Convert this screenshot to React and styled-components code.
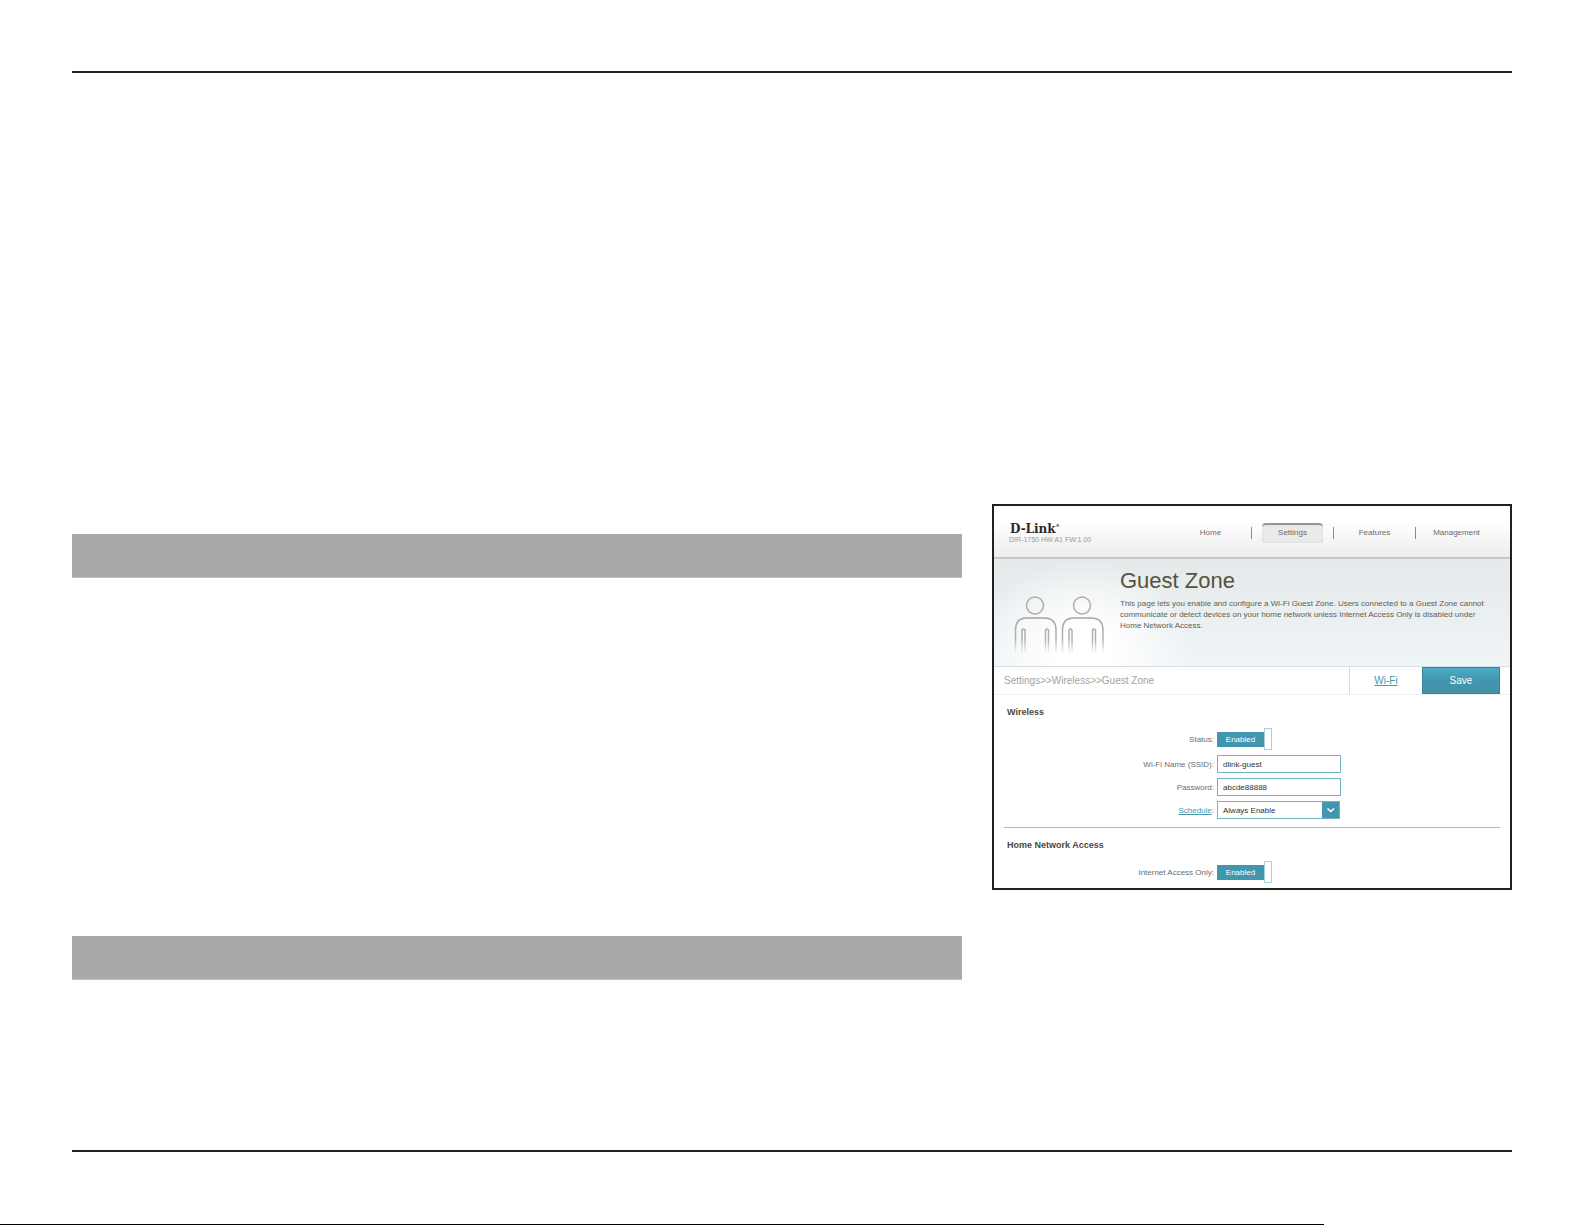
import React, { useState } from 'react';
import styled, { createGlobalStyle } from 'styled-components';

const App = () => {
  const [status, setStatus] = useState(true);
  const [internetOnly, setInternetOnly] = useState(true);
  const [ssid, setSsid] = useState('dlink-guest');
  const [password, setPassword] = useState('abcde88888');

  return (
    <Page>
      <GlobalStyle />
      <Sheet>
        <Columns>
          <TextColumn>
            <Band />
            <Band />
          </TextColumn>
          <Panel>
            <Header>
              <Brand>
                <Logo>
                  D-Link<sup>®</sup>
                </Logo>
                <Version>DIR-1750 HW:A1 FW:1.00</Version>
              </Brand>
              <Nav>
                <NavItem>
                  <NavLink href="#home">Home</NavLink>
                </NavItem>
                <NavItem>
                  <NavLink href="#settings" $active>
                    Settings
                  </NavLink>
                </NavItem>
                <NavItem>
                  <NavLink href="#features">Features</NavLink>
                </NavItem>
                <NavItem>
                  <NavLink href="#management">Management</NavLink>
                </NavItem>
              </Nav>
            </Header>
            <Hero>
              <Guests />
              <Intro>
                <h1>Guest Zone</h1>
                <p>
                  This page lets you enable and configure a Wi-Fi Guest Zone.
                  Users connected to a Guest Zone cannot communicate or detect
                  devices on your home network unless Internet Access Only is
                  disabled under Home Network Access.
                </p>
              </Intro>
            </Hero>
            <Toolbar>
              <Crumbs>Settings&gt;&gt;Wireless&gt;&gt;Guest Zone</Crumbs>
              <WifiTab>
                <a href="#wifi">Wi-Fi</a>
              </WifiTab>
              <SaveButton type="button">Save</SaveButton>
            </Toolbar>
            <Section>
              <SectionTitle>Wireless</SectionTitle>
              <Fields>
                <Label htmlFor="status">Status:</Label>
                <Toggle id="status" checked={status} onChange={setStatus} />
                <Label htmlFor="ssid">Wi-Fi Name (SSID):</Label>
                <TextInput
                  id="ssid"
                  value={ssid}
                  onChange={(e) => setSsid(e.target.value)}
                />
                <Label htmlFor="password">Password:</Label>
                <TextInput
                  id="password"
                  value={password}
                  onChange={(e) => setPassword(e.target.value)}
                />
                <Label htmlFor="schedule">
                  <a href="#schedule">Schedule</a>:
                </Label>
                <SelectBox>
                  <select id="schedule">
                    <option>Always Enable</option>
                  </select>
                  <Arrow viewBox="0 0 17 16">
                    <path d="M5.5 6.5 L8.8 9.5 L12 6.5" />
                  </Arrow>
                </SelectBox>
              </Fields>
            </Section>
            <Section>
              <SectionTitle>Home Network Access</SectionTitle>
              <Fields>
                <Label htmlFor="internet-only">Internet Access Only:</Label>
                <Toggle
                  id="internet-only"
                  checked={internetOnly}
                  onChange={setInternetOnly}
                />
              </Fields>
            </Section>
          </Panel>
        </Columns>
      </Sheet>
      <PageEdge />
    </Page>
  );
};

const Toggle = ({ id, checked, onChange }) => (
  <Switch>
    <input
      id={id}
      type="checkbox"
      checked={checked}
      onChange={(e) => onChange(e.target.checked)}
    />
    <Track>{checked ? 'Enabled' : 'Disabled'}</Track>
    <Knob />
  </Switch>
);

const Person = ({ x }) => (
  <g transform={`translate(${x} 0)`}>
    <circle cx="21" cy="8.500" r="8.5" stroke="#adadad" />
    <path d="M1.500 55 V33 Q1.500 21 13 21 H30 Q42 21 42 33 V55" />
    <path d="M8 56 V34 Q8 32 9.500 32 Q11 32 11 34 V56" />
    <path d="M31.500 56 V34 Q31.500 32 33 32 Q34.500 32 34.500 34 V56" />
  </g>
);

const Guests = () => (
  <GuestsIcon viewBox="0 0 90 58">
    <defs>
      <linearGradient
        id="fade"
        gradientUnits="userSpaceOnUse"
        x1="0"
        y1="20"
        x2="0"
        y2="57"
      >
        <stop offset="0" stopColor="#a4a4a4" />
        <stop offset="0.6" stopColor="#b2b2b2" />
        <stop offset="1" stopColor="#b2b2b2" stopOpacity="0" />
      </linearGradient>
    </defs>
    <Person x={0} />
    <Person x={47} />
  </GuestsIcon>
);

export default App;

const GlobalStyle = createGlobalStyle`
  *, *::before, *::after {
    box-sizing: border-box;
  }
  body {
    margin: 0;
    background: white;
    font-family: 'Liberation Sans', Arial, sans-serif;
  }
`;
const Page = styled.div`
  display: flex;
  flex-direction: column;
  min-height: 100vh;
`;
const Sheet = styled.main`
  flex: 1;
  margin: 71px 73px 72px 72px;
  border-top: 2px solid #231f20;
  border-bottom: 2px solid #231f20;
`;
const Columns = styled.div`
  display: grid;
  grid-template-columns: 1fr 520px;
  align-items: start;
  gap: 30px;
  padding: 431px 0 160px;
`;
const TextColumn = styled.div`
  display: grid;
  gap: 358px;
  padding-top: 30px;
`;
const Band = styled.div`
  height: 44px;
  background: #a9a9a9;
  border-bottom: 1px solid #c4c4c4;
`;
const PageEdge = styled.div`
  height: 1px;
  margin-right: 261px;
  background: black;
`;
const Panel = styled.section`
  height: 386px;
  overflow: hidden;
  border: 2px solid #231f20;
  color: #626053;
  font-size: 8px;
  line-height: 11px;
`;
const Header = styled.header`
  display: flex;
  justify-content: space-between;
  height: 53px;
  padding: 17px 13px 0 15px;
  background: linear-gradient(#fff 30%, #ececec);
  border-bottom: 2px solid #c6c8c8;
`;
const Brand = styled.div`
  display: flex;
  flex-direction: column;
`;
const Logo = styled.div`
  padding-left: 1px;
  color: #2e2b29;
  font-family: 'DejaVu Serif', serif;
  font-size: 12px;
  font-weight: bold;
  line-height: 12px;

  sup {
    font-size: 4px;
    line-height: 0;
    vertical-align: 6px;
  }
`;
const Version = styled.div`
  color: #999;
  font-size: 7px;
  line-height: 9px;
`;
const Nav = styled.nav`
  display: flex;
`;
const NavItem = styled.div`
  display: flex;
  justify-content: center;
  width: 82px;

  & + &::before {
    content: '';
    width: 1px;
    height: 12px;
    margin: 4px 10px 0 0;
    background: #8c8c8c;
  }
  &:first-child {
    padding-left: 11px;
  }
`;
const NavLink = styled.a`
  flex: 1;
  height: 20px;
  margin-right: 10px;
  border-top: 2px solid ${(props) => (props.$active ? '#979797' : 'transparent')};
  border-radius: 4px;
  background: ${(props) => (props.$active ? '#e9eaea' : 'none')};
  box-shadow: ${(props) => (props.$active ? 'inset 0 0 1px #aaa' : 'none')};
  color: #6b6b6b;
  line-height: 16px;
  text-align: center;
  text-decoration: none;
`;
const Hero = styled.div`
  display: flex;
  gap: 16px;
  height: 108px;
  padding: 9px 16px 0 20px;
  border-bottom: 1px solid #d9dfdf;
  background:
    radial-gradient(ellipse 110px 90px at 90px 90px, #fff 25%, transparent),
    linear-gradient(#e5e9ea, #eff4f7);
`;
const GuestsIcon = styled.svg`
  flex: none;
  width: 90px;
  height: 58px;
  margin-top: 29px;
  overflow: visible;
  fill: none;
  stroke: url(#fade);
  stroke-width: 1.5;
`;
const Intro = styled.div`
  h1 {
    margin: 0 0 5px;
    color: #56533f;
    font-size: 22px;
    font-weight: normal;
    line-height: 25px;
  }
  p {
    margin: 0;
  }
`;
const Toolbar = styled.div`
  display: flex;
  height: 28px;
  padding: 0 10px;
  border-bottom: 1px solid #f0f0f0;
  font-size: 10px;
  line-height: 27px;
`;
const Crumbs = styled.div`
  flex: 1;
  color: #a3a3a3;
`;
const WifiTab = styled.div`
  width: 73px;
  border-left: 1px solid #d9d9d9;
  text-align: center;

  a {
    color: #4598ae;
  }
`;
const SaveButton = styled.button`
  width: 78px;
  padding: 0;
  border: 1px solid #36859a;
  background: linear-gradient(#4aaec6, #4296ad 50%, #4292a8);
  color: white;
  font-family: inherit;
  font-size: 10px;
`;
const Section = styled.div`
  margin: 0 10px;
  padding: 12px 3px 8px;

  & + & {
    border-top: 1px solid #b5b5b5;
  }
`;
const SectionTitle = styled.h2`
  margin: 0 0 10px;
  color: #4c4840;
  font-size: 9px;
  line-height: 11px;
`;
const Fields = styled.div`
  display: grid;
  grid-template-columns: 207px 124px;
  gap: 5px 3px;
  align-items: center;
`;
const Label = styled.label`
  color: #6d6d6d;
  text-align: right;

  a {
    color: #4598ae;
  }
`;
const Switch = styled.div`
  display: flex;
  align-items: center;
  position: relative;

  input {
    position: absolute;
    inset: 0;
    margin: 0;
    opacity: 0;
  }
`;
const Track = styled.span`
  width: 47px;
  background: #4297ae;
  color: white;
  line-height: 15px;
  text-align: center;
`;
const Knob = styled.span`
  width: 8px;
  height: 22px;
  border: 1px solid #a5d0dc;
  background: white;
`;
const TextInput = styled.input`
  width: 124px;
  height: 18px;
  padding: 0 5px;
  border: 1px solid #71b2c3;
  color: #333;
  font-family: inherit;
  font-size: 8px;
`;
const SelectBox = styled.div`
  display: flex;
  width: 123px;
  height: 18px;
  border: 1px solid #71b2c3;

  select {
    flex: 1;
    appearance: none;
    padding: 0 5px;
    border: 0;
    background: white;
    color: #333;
    font-family: inherit;
    font-size: 8px;
  }
`;
const Arrow = styled.svg`
  width: 17px;
  height: 16px;
  background: #4297ae;
  fill: none;
  stroke: white;
  stroke-width: 1.5;
`;
